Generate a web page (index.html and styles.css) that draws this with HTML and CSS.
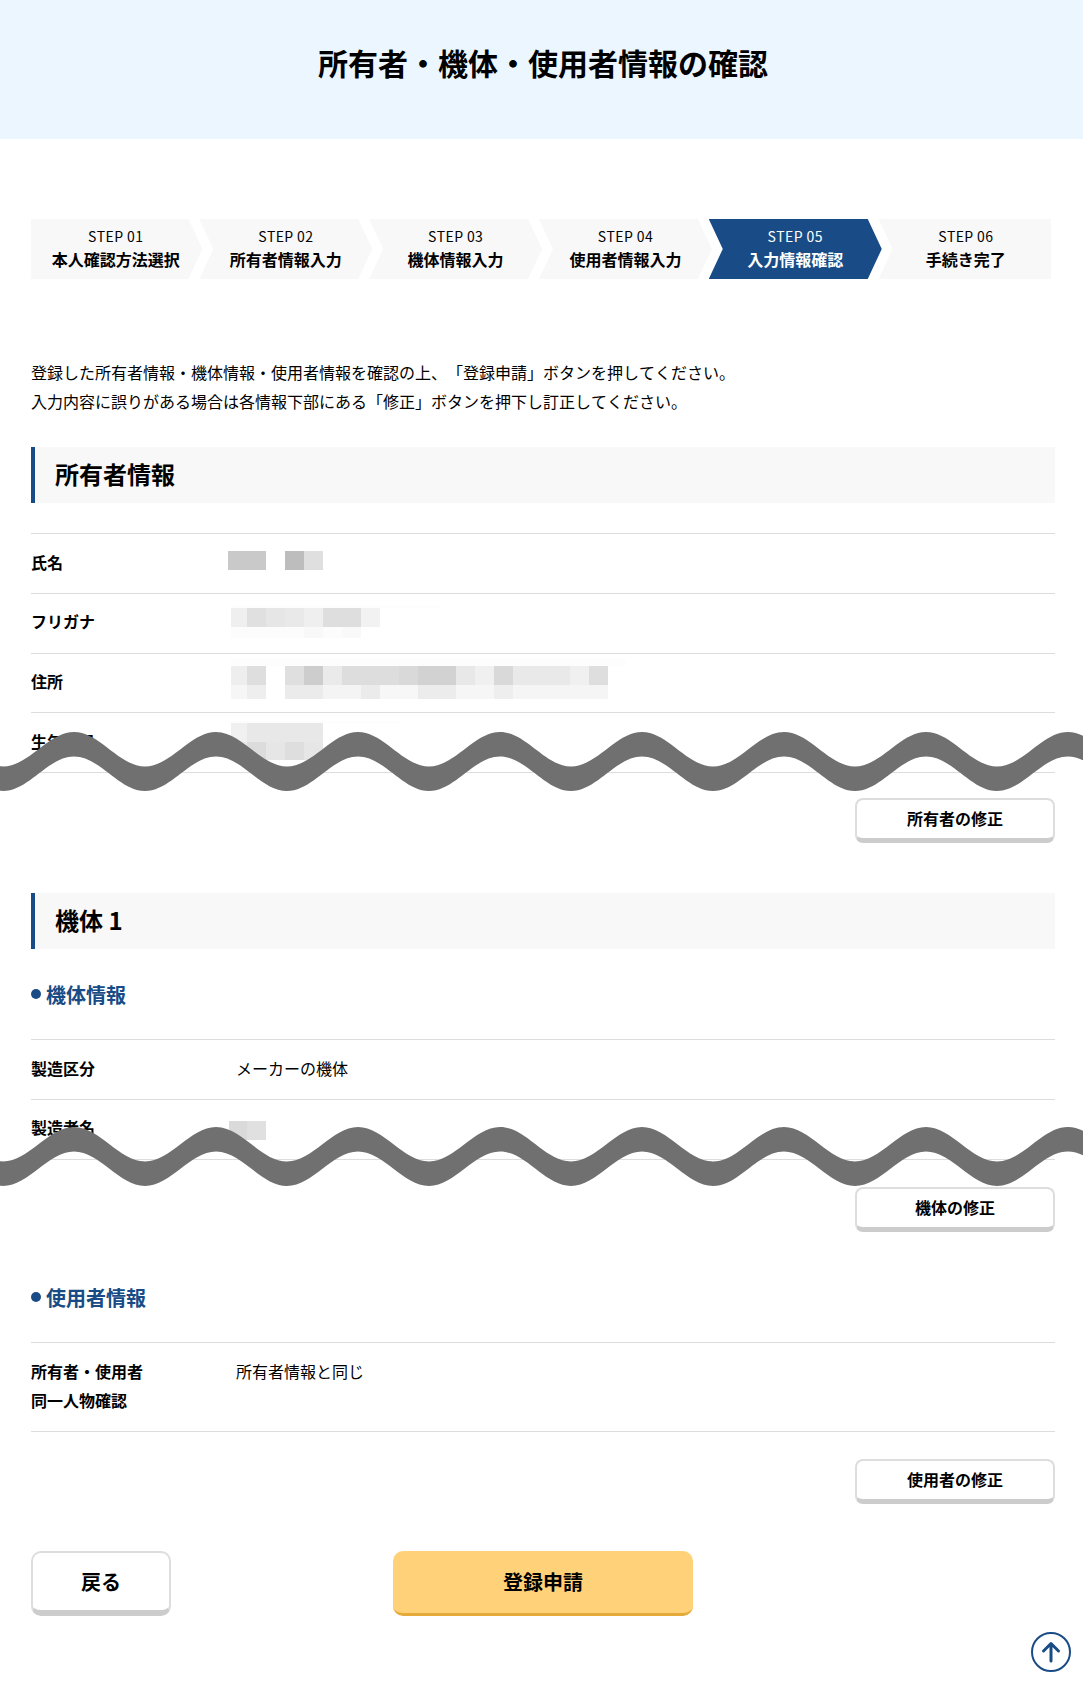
FILE: index.html
```html
<!DOCTYPE html>
<html lang="ja">
<head>
<meta charset="utf-8">
<title>所有者・機体・使用者情報の確認</title>
<link rel="stylesheet" href="styles.css">
</head>
<body>
<header class="page-header"><h1>所有者・機体・使用者情報の確認</h1></header>
<main class="content">
  <ol class="steps">
    <li class="step step-first"><span>STEP 01</span><b>本人確認方法選択</b></li>
    <li class="step"><span>STEP 02</span><b>所有者情報入力</b></li>
    <li class="step"><span>STEP 03</span><b>機体情報入力</b></li>
    <li class="step"><span>STEP 04</span><b>使用者情報入力</b></li>
    <li class="step step-current"><span>STEP 05</span><b>入力情報確認</b></li>
    <li class="step step-last"><span>STEP 06</span><b>手続き完了</b></li>
  </ol>
  <p class="intro">登録した所有者情報・機体情報・使用者情報を確認の上、「登録申請」ボタンを押してください。<br>入力内容に誤りがある場合は各情報下部にある「修正」ボタンを押下し訂正してください。</p>

  <h2 class="section-title">所有者情報</h2>
  <div class="table table-owner">
    <div class="row"><div class="label">氏名</div><div class="value">
      <svg class="mosaic" viewBox="0 0 400 60"><rect x="0" y="18" width="38" height="19" fill="#c9c9c9"/><rect x="57" y="18" width="19" height="19" fill="#bdbdbd"/><rect x="76" y="18" width="19" height="19" fill="#dfdfdf"/></svg>
    </div></div>
    <div class="row"><div class="label">フリガナ</div><div class="value">
      <svg class="mosaic" viewBox="0 0 400 60"><rect x="3" y="13" width="210" height="2" fill="#fdfdfd"/><rect x="3" y="15" width="16" height="19" fill="#efefef"/><rect x="19" y="15" width="19" height="19" fill="#e0e0e0"/><rect x="38" y="15" width="19" height="19" fill="#e6e6e6"/><rect x="57" y="15" width="19" height="19" fill="#e9e9e9"/><rect x="76" y="15" width="19" height="19" fill="#efefef"/><rect x="95" y="15" width="38" height="19" fill="#dedede"/><rect x="133" y="15" width="19" height="19" fill="#f2f2f2"/><rect x="3" y="34" width="130" height="11" fill="#fcfcfc"/><rect x="76" y="34" width="19" height="11" fill="#f8f8f8"/><rect x="114" y="34" width="19" height="11" fill="#f9f9f9"/></svg>
    </div></div>
    <div class="row"><div class="label">住所</div><div class="value">
      <svg class="mosaic" viewBox="0 0 400 60"><rect x="3" y="6" width="395" height="7" fill="#fdfdfd"/><rect x="3" y="13" width="16" height="19" fill="#eeeeee"/><rect x="19" y="13" width="19" height="19" fill="#dedede"/><rect x="57" y="13" width="19" height="19" fill="#dfdfdf"/><rect x="76" y="13" width="19" height="19" fill="#cdcdcd"/><rect x="95" y="13" width="19" height="19" fill="#eaeaea"/><rect x="114" y="13" width="57" height="19" fill="#dddddd"/><rect x="171" y="13" width="19" height="19" fill="#d9d9d9"/><rect x="190" y="13" width="38" height="19" fill="#d2d2d2"/><rect x="228" y="13" width="19" height="19" fill="#e8e8e8"/><rect x="247" y="13" width="19" height="19" fill="#f0f0f0"/><rect x="266" y="13" width="19" height="19" fill="#d9d9d9"/><rect x="285" y="13" width="57" height="19" fill="#e9e9e9"/><rect x="342" y="13" width="19" height="19" fill="#f0f0f0"/><rect x="361" y="13" width="19" height="19" fill="#dedede"/><rect x="3" y="32" width="16" height="14" fill="#f6f6f6"/><rect x="19" y="32" width="19" height="14" fill="#eeeeee"/><rect x="57" y="32" width="38" height="14" fill="#ebebeb"/><rect x="95" y="32" width="38" height="14" fill="#f4f4f4"/><rect x="133" y="32" width="19" height="14" fill="#ebebeb"/><rect x="152" y="32" width="38" height="14" fill="#f7f7f7"/><rect x="190" y="32" width="38" height="14" fill="#ececec"/><rect x="228" y="32" width="38" height="14" fill="#f6f6f6"/><rect x="266" y="32" width="19" height="14" fill="#eeeeee"/><rect x="285" y="32" width="95" height="14" fill="#f5f5f5"/></svg>
    </div></div>
    <div class="row"><div class="label">生年月日</div><div class="value">
      <svg class="mosaic" viewBox="0 0 400 60"><rect x="3" y="8" width="170" height="2" fill="#fdfdfd"/><rect x="3" y="10" width="16" height="19" fill="#f0f0f0"/><rect x="19" y="10" width="76" height="19" fill="#e8e8e8"/><rect x="3" y="29" width="16" height="18" fill="#e9e9e9"/><rect x="19" y="29" width="19" height="18" fill="#dcdcdc"/><rect x="38" y="29" width="19" height="18" fill="#e6e6e6"/><rect x="57" y="29" width="19" height="18" fill="#dedede"/><rect x="76" y="29" width="19" height="18" fill="#e6e6e6"/></svg>
    </div></div>
    <svg class="wave wave-owner" viewBox="0 0 1083 59"><path d="M-68 0C-42 0-23 34.500 3 34.500S48 0 74 0S119 34.500 145 34.500S190 0 216 0S261 34.500 287 34.500S332 0 358 0S403 34.500 429 34.500S474 0 500 0S545 34.500 571 34.500S616 0 642 0S687 34.500 713 34.500S758 0 784 0S829 34.500 855 34.500S900 0 926 0S971 34.500 997 34.500S1042 0 1068 0S1113 34.500 1139 34.500S1184 0 1210 0L1210 24.500C1184 24.500 1165 59 1139 59S1094 24.500 1068 24.500S1023 59 997 59S952 24.500 926 24.500S881 59 855 59S810 24.500 784 24.500S739 59 713 59S668 24.500 642 24.500S597 59 571 59S526 24.500 500 24.500S455 59 429 59S384 24.500 358 24.500S313 59 287 59S242 24.500 216 24.500S171 59 145 59S100 24.500 74 24.500S29 59 3 59S-42 24.500-68 24.500Z"/></svg>
  </div>
  <div class="actions"><a class="btn-small">所有者の修正</a></div>

  <h2 class="section-title section-gap">機体 1</h2>
  <h3 class="subhead subhead-first">機体情報</h3>
  <div class="table table-craft">
    <div class="row"><div class="label">製造区分</div><div class="value text">メーカーの機体</div></div>
    <div class="row"><div class="label">製造者名</div><div class="value">
      <svg class="mosaic" viewBox="0 0 400 60"><rect x="1" y="22" width="18" height="19" fill="#dadada"/><rect x="19" y="22" width="19" height="19" fill="#e0e0e0"/></svg>
    </div></div>
    <svg class="wave wave-craft" viewBox="0 0 1083 59"><path d="M-68 0C-42 0-23 34.500 3 34.500S48 0 74 0S119 34.500 145 34.500S190 0 216 0S261 34.500 287 34.500S332 0 358 0S403 34.500 429 34.500S474 0 500 0S545 34.500 571 34.500S616 0 642 0S687 34.500 713 34.500S758 0 784 0S829 34.500 855 34.500S900 0 926 0S971 34.500 997 34.500S1042 0 1068 0S1113 34.500 1139 34.500S1184 0 1210 0L1210 24.500C1184 24.500 1165 59 1139 59S1094 24.500 1068 24.500S1023 59 997 59S952 24.500 926 24.500S881 59 855 59S810 24.500 784 24.500S739 59 713 59S668 24.500 642 24.500S597 59 571 59S526 24.500 500 24.500S455 59 429 59S384 24.500 358 24.500S313 59 287 59S242 24.500 216 24.500S171 59 145 59S100 24.500 74 24.500S29 59 3 59S-42 24.500-68 24.500Z"/></svg>
  </div>
  <div class="actions actions-craft"><a class="btn-small">機体の修正</a></div>

  <h3 class="subhead subhead-user">使用者情報</h3>
  <div class="table">
    <div class="row row-tall"><div class="label">所有者・使用者<br>同一人物確認</div><div class="value text">所有者情報と同じ</div></div>
  </div>
  <div class="actions actions-user"><a class="btn-small">使用者の修正</a></div>

  <div class="footer-actions">
    <a class="btn-back">戻る</a>
    <a class="btn-submit">登録申請</a>
  </div>
</main>
<a class="to-top" aria-label="ページトップへ">
  <svg viewBox="0 0 40 40" width="40" height="40"><circle cx="20" cy="20" r="19" fill="none" stroke="#194c86" stroke-width="2"/><path d="M20 29V12M12.5 19L20 11.5L27.500 19" fill="none" stroke="#194c86" stroke-width="3" stroke-linecap="round" stroke-linejoin="round"/></svg>
</a>
</body>
</html>
```
FILE: styles.css
```css
* { box-sizing: border-box; }
html, body { margin: 0; padding: 0; }
body {
  position: relative;
  height: 1683px;
  overflow: hidden;
  background: #fff;
  color: #000;
  font-family: "Noto Sans CJK JP", "Noto Sans", sans-serif;
  font-size: 16px;
  text-spacing-trim: space-all;
  font-kerning: none;
}
.page-header {
  height: 139px;
  background: #ebf6ff;
  padding: 40px 0 0 3px;
  text-align: center;
}
.page-header h1 {
  margin: 0;
  font-size: 30px;
  line-height: 44px;
  font-weight: 700;
}
.content {
  width: 1024px;
  margin-left: 31px;
}
.steps {
  display: flex;
  list-style: none;
  margin: 80px 0 0;
  padding: 0;
}
.step {
  width: 173px;
  height: 60px;
  margin-left: -3.2px;
  flex: none;
  background: #f8f8f8;
  clip-path: polygon(0 0, 159px 0, 173px 30px, 159px 60px, 0 60px, 14px 30px);
  display: flex;
  flex-direction: column;
  align-items: center;
  padding-top: 6px;
}
.step span { font-size: 14px; line-height: 23px; letter-spacing: 0.4px; }
.step b { font-size: 16px; line-height: 23px; font-weight: 700; }
.step-first {
  width: 171.5px;
  margin-left: 0;
  padding-right: 2px;
  clip-path: polygon(0 0, 157.500px 0, 171.500px 30px, 157.500px 60px, 0 60px);
}
.step-last {
  width: 172.5px;
  padding-left: 2px;
  clip-path: polygon(0 0, 172.500px 0, 172.500px 60px, 0 60px, 14px 30px);
}
.step-current { background: #194c86; color: #fff; }
.intro {
  margin: 79px 0 0;
  line-height: 29px;
  height: 59px;
}
.section-title {
  margin: 30px 0 0;
  height: 56px;
  padding-left: 20px;
  background: #f8f8f8;
  border-left: 4px solid #194c86;
  font-size: 24px;
  line-height: 54px;
  font-weight: 700;
}
.section-gap { margin-top: 50px; }
.table {
  position: relative;
  margin-top: 30px;
  border-top: 1px solid #dddddd;
}
.row {
  display: flex;
  align-items: center;
  height: 59.75px;
  border-bottom: 1px solid #dddddd;
}
.row-tall { height: 89px; align-items: flex-start; padding-top: 14px; }
.label {
  width: 197px;
  flex: none;
  font-weight: 700;
  line-height: 29.5px;
  padding-bottom: 2px;
}
.value { flex: 1; }
.text { padding: 0 0 2px 8px; line-height: 29.5px; }
.mosaic {
  display: block;
  width: 400px;
  height: 60px;
  shape-rendering: crispEdges;
}
.wave {
  position: absolute;
  left: -31px;
  width: 1083px;
  height: 59px;
  fill: #707070;
}
.wave-owner { top: 198px; }
.wave-craft { top: 86.5px; }
.actions {
  display: flex;
  justify-content: flex-end;
  margin-top: 25px;
}
.actions-craft { margin-top: 27px; }
.actions-user { margin-top: 27px; }
.btn-small {
  width: 200px;
  height: 45px;
  border: 2px solid #dddddd;
  border-bottom: 5px solid #cccccc;
  border-radius: 8px;
  background: #fff;
  font-weight: 700;
  line-height: 36px;
  text-align: center;
}
.subhead {
  position: relative;
  margin: 0;
  padding-left: 15px;
  color: #194c86;
  font-size: 20px;
  line-height: 30px;
  font-weight: 700;
}
.subhead::before {
  content: "";
  position: absolute;
  left: 0;
  top: 9px;
  width: 10px;
  height: 10px;
  border-radius: 50%;
  background: #194c86;
}
.subhead-first { margin-top: 31px; }
.subhead-first + .table { margin-top: 29px; }
.subhead-user { margin-top: 51px; }
.subhead-user + .table { margin-top: 29px; }
.footer-actions {
  position: relative;
  display: flex;
  margin-top: 47px;
}
.btn-back, .btn-submit {
  height: 65px;
  font-size: 20px;
  font-weight: 700;
  text-align: center;
  border-radius: 10px;
}
.btn-back {
  width: 140px;
  border: 2px solid #dddddd;
  border-bottom: 6px solid #cccccc;
  background: #fff;
  line-height: 57px;
}
.btn-submit {
  width: 300px;
  margin-left: 222px;
  background: #ffd27a;
  border-bottom: 3px solid #e5aa3a;
  line-height: 62px;
}
.to-top {
  position: absolute;
  left: 1031px;
  top: 1632px;
  width: 40px;
  height: 40px;
}
.to-top svg { display: block; }
```
